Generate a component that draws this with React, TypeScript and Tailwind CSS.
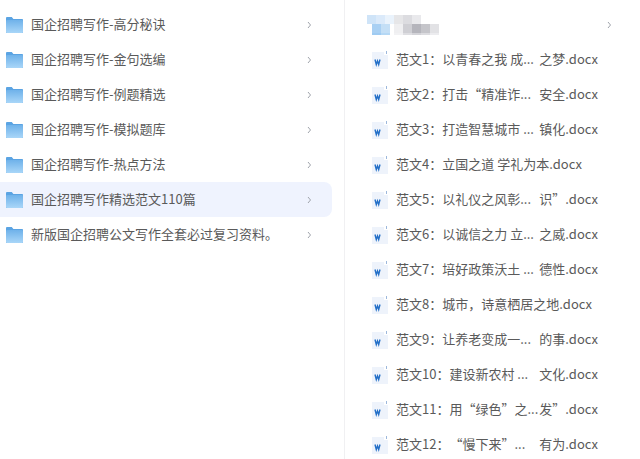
const folders = [
  "国企招聘写作-高分秘诀",
  "国企招聘写作-金句选编",
  "国企招聘写作-例题精选",
  "国企招聘写作-模拟题库",
  "国企招聘写作-热点方法",
  "国企招聘写作精选范文110篇",
  "新版国企招聘公文写作全套必过复习资料。",
];

// long names are cut in the middle, so the tail sits flush right
const docs = [
  ["范文1：以青春之我 成...", "之梦.docx"],
  ["范文2：打击“精准诈...", "安全.docx"],
  ["范文3：打造智慧城市 ...", "镇化.docx"],
  ["范文4：立国之道 学礼为本.docx", ""],
  ["范文5：以礼仪之风彰...", "识”.docx"],
  ["范文6：以诚信之力 立...", "之威.docx"],
  ["范文7：培好政策沃土 ...", "德性.docx"],
  ["范文8：城市，诗意栖居之地.docx", ""],
  ["范文9：让养老变成一...", "的事.docx"],
  ["范文10：建设新农村 ...", "文化.docx"],
  ["范文11：用“绿色”之...", "发”.docx"],
  ["范文12：“慢下来”...", "有为.docx"],
];

function FolderIcon() {
  return (
    <svg width="17" height="16" viewBox="0 0 17 16" className="shrink-0">
      <defs>
        <linearGradient id="folderFill" x1="0" y1="0" x2="0" y2="1">
          <stop offset="0" stopColor="#6fb2ea" />
          <stop offset="1" stopColor="#a9d6f8" />
        </linearGradient>
      </defs>
      <path d="M0 1.2C0 .5.5 0 1.2 0h4.6l1.6 2H16c.6 0 1 .4 1 1v12c0 .6-.4 1-1 1H1c-.6 0-1-.4-1-1z" fill="#5ba4e3" />
      <rect x="0" y="3" width="17" height="13" rx="1" fill="url(#folderFill)" />
    </svg>
  );
}

function WordIcon() {
  return (
    <svg width="16" height="18" viewBox="0 0 16 18" className="shrink-0">
      <path d="M0 1h12v3h4v14H0z" fill="#eef3fb" />
      <path d="M14 0h1v3h-1z" fill="#9db8dc" />
      <path d="M3 8.500l1.300 5 1.200-3.500 1.200 3.500 1.300-5" fill="none" stroke="#2470c8" strokeWidth="1.400" />
    </svg>
  );
}

function Chevron() {
  return (
    <svg width="5" height="8" viewBox="0 0 5 8" className="shrink-0">
      <path d="M1 1l2.500 3L1 7" fill="none" stroke="#a0a4ac" strokeWidth="1" />
    </svg>
  );
}

// mosaic that hides the folder name in the source picture
function BlurredName() {
  const cells = [
    [0, 0, "#cfe4f8"], [9, 0, "#dbeafa"], [18, 0, "#eaf3fc"], [27, 0, "#e6e6e8"], [36, 0, "#dcdce0"], [45, 0, "#e9e9ec"],
    [5, 9, "#a9d0f3"], [14, 9, "#c4dff6"], [27, 9, "#efeff1"], [36, 9, "#cfcfd4"], [45, 9, "#b5b5bc"], [54, 9, "#c5c5ca"], [63, 9, "#e2e2e5"],
    [5, 18, "#9fcbf2"], [14, 18, "#b5d8f5"], [27, 18, "#f2f2f4"], [36, 18, "#dedee2"], [45, 18, "#d3d3d8"], [54, 18, "#dcdce0"], [63, 18, "#ececef"],
  ] as const;
  return (
    <svg width="73" height="20" viewBox="0 0 73 20" className="shrink-0">
      {cells.map(([x, y, c]) => (
        <rect key={`${x}-${y}`} x={x} y={y} width="9" height={y === 18 ? 2 : 9} fill={c} />
      ))}
    </svg>
  );
}

export default function App() {
  return (
    <div className="flex h-[459px] w-[640px] overflow-hidden bg-white text-[13px] text-[#5a5a5a] [text-spacing-trim:space-all] font-['Noto_Sans_CJK_SC','Liberation_Sans',sans-serif]">
      <div className="w-[345px] shrink-0 border-r border-[#f0f0f2] pt-[7px] pr-3">
        {folders.map((name, i) => (
          <div
            key={name}
            className={`flex h-[35px] items-center rounded-r-lg pl-[6px] pr-5 ${i === 5 ? "bg-[#eff3fe]" : ""}`}
          >
            <FolderIcon />
            <span className="ml-2 flex-1 whitespace-nowrap pb-[2px]">{name}</span>
            <Chevron />
          </div>
        ))}
      </div>
      <div className="flex-1 pt-[7px]">
        <div className="flex h-[35px] items-center pl-[22px] pr-7">
          <div className="flex-1">
            <BlurredName />
          </div>
          <Chevron />
        </div>
        {docs.map(([head, tail]) => (
          <div key={head} className="flex h-[35px] items-center pl-[27px]">
            <WordIcon />
            <span className="ml-2 flex w-[202px] justify-between whitespace-nowrap pb-[2px]">
              <span>{head}</span>
              {tail && <span>{tail}</span>}
            </span>
          </div>
        ))}
      </div>
    </div>
  );
}
